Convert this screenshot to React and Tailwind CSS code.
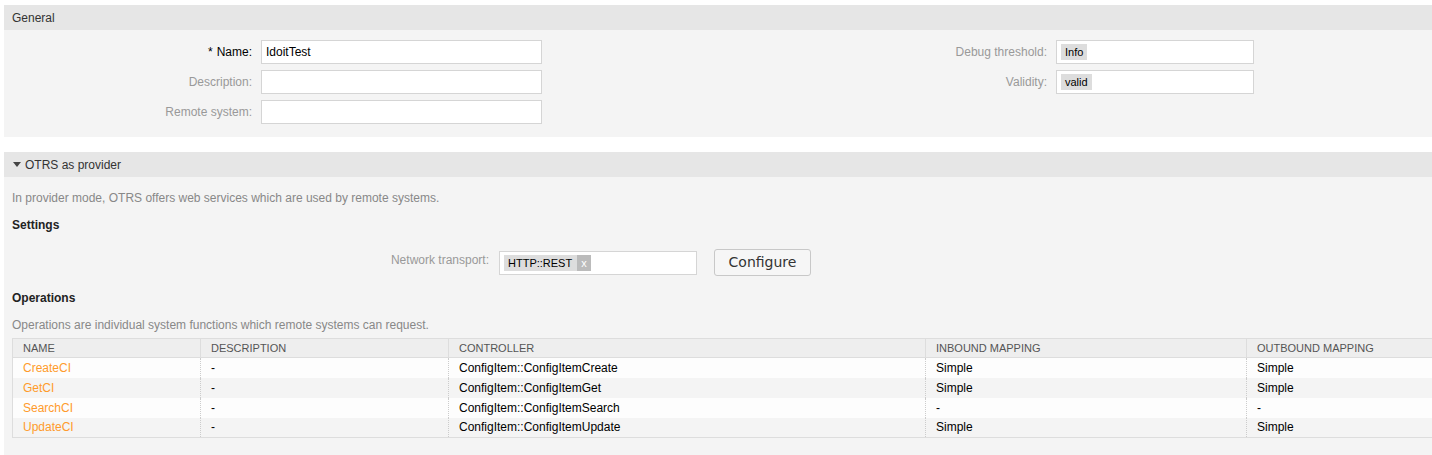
const rows = [
  { name: 'CreateCI', controller: 'ConfigItem::ConfigItemCreate', inbound: 'Simple', outbound: 'Simple' },
  { name: 'GetCI', controller: 'ConfigItem::ConfigItemGet', inbound: 'Simple', outbound: 'Simple' },
  { name: 'SearchCI', controller: 'ConfigItem::ConfigItemSearch', inbound: '-', outbound: '-' },
  { name: 'UpdateCI', controller: 'ConfigItem::ConfigItemUpdate', inbound: 'Simple', outbound: 'Simple' },
]

function Field({ label, required, children, labelW }) {
  return (
    <div className="flex items-center h-[24px]">
      <label className={`${labelW} text-right pr-[9px] ${required ? 'text-[#000]' : 'text-[#999]'}`}>
        {required && <span className="mr-[4px]">*</span>}
        {label}:
      </label>
      {children}
    </div>
  )
}

function Input({ w, children }) {
  return (
    <div className={`${w} h-[24px] bg-white border border-[#d5d5d5] flex items-center px-[4px]`}>
      {children}
    </div>
  )
}

function Tag({ children }) {
  return <span className="bg-[#ddd] text-[#000] text-[11px] leading-[16px] px-[4px]">{children}</span>
}

export default function App() {
  return (
    <div className="w-[1432px] h-[455px] overflow-hidden bg-white text-[12px] text-[#333]" style={{ fontFamily: '"Liberation Sans", Arial, sans-serif' }}>
      <div className="w-[1460px] ml-[4px] pt-[5px]">
        {/* General */}
        <section>
          <div className="h-[25px] bg-[#e6e6e6] flex items-center pl-[8px]">General</div>
          <div className="bg-[#f4f4f4] h-[107px] flex pt-[10px]">
            <div className="flex flex-col gap-[6px]">
              <Field label="Name" required labelW="w-[257px]">
                <Input w="w-[281px]"><span className="text-[#000]">IdoitTest</span></Input>
              </Field>
              <Field label="Description" labelW="w-[257px]">
                <Input w="w-[281px]" />
              </Field>
              <Field label="Remote system" labelW="w-[257px]">
                <Input w="w-[281px]" />
              </Field>
            </div>
            <div className="flex flex-col gap-[6px]">
              <Field label="Debug threshold" labelW="w-[514px]">
                <Input w="w-[198px]"><Tag>Info</Tag></Input>
              </Field>
              <Field label="Validity" labelW="w-[514px]">
                <Input w="w-[198px]"><Tag>valid</Tag></Input>
              </Field>
            </div>
          </div>
        </section>

        {/* OTRS as provider */}
        <section className="mt-[15px]">
          <div className="h-[25px] bg-[#e6e6e6] flex items-center pl-[9px] gap-[4px]">
            <span className="w-0 h-0 border-l-[4px] border-r-[4px] border-t-[5px] border-l-transparent border-r-transparent border-t-[#444]" />
            OTRS as provider
          </div>
          <div className="bg-[#f4f4f4] h-[300px] px-[8px]">
            <p className="text-[#888] pt-[14px] leading-[14px]">In provider mode, OTRS offers web services which are used by remote systems.</p>
            <h3 className="font-bold text-[#222] mt-[13px] leading-[14px]">Settings</h3>
            <div className="flex items-center mt-[17px] h-[27px]">
              <label className="w-[487px] text-right pr-[10px] text-[#999] -mt-[5px]">Network transport:</label>
              <div className="w-[198px] h-[24px] bg-white border border-[#d5d5d5] flex items-center px-[4px]">
                <span className="bg-[#ddd] text-[#000] text-[11px] leading-[16px] pl-[4px] flex items-center">
                  HTTP::REST
                  <span className="ml-[5px] bg-[#bbb] text-white px-[4px]">x</span>
                </span>
              </div>
              <button
                className="ml-[17px] w-[97px] h-[27px] bg-[#f6f6f6] border border-[#c8c8c8] rounded-[3px] text-[14px] text-[#333] pb-[1px]"
                style={{ fontFamily: '"DejaVu Sans", sans-serif' }}
              >
                Configure
              </button>
            </div>
            <h3 className="font-bold text-[#222] mt-[15px] leading-[14px]">Operations</h3>
            <p className="text-[#888] mt-[13px] leading-[14px]">Operations are individual system functions which remote systems can request.</p>
            <table className="mt-[6px] border border-[#ddd] border-collapse text-[12px]">
              <thead>
                <tr className="bg-[#eee] h-[19px] text-[11px] text-[#555] uppercase">
                  <th className="w-[188px] text-left font-normal pl-[10px] border-r border-[#ddd] border-b">Name</th>
                  <th className="w-[248px] text-left font-normal pl-[10px] border-r border-[#ddd] border-b">Description</th>
                  <th className="w-[477px] text-left font-normal pl-[10px] border-r border-[#ddd] border-b">Controller</th>
                  <th className="w-[321px] text-left font-normal pl-[10px] border-r border-[#ddd] border-b">Inbound Mapping</th>
                  <th className="w-[200px] text-left font-normal pl-[10px] border-b border-[#ddd]">Outbound Mapping</th>
                </tr>
              </thead>
              <tbody>
                {rows.map((r, i) => (
                  <tr key={r.name} className={`h-[20px] text-[#000] ${i % 2 === 0 ? 'bg-[#fdfdfd]' : 'bg-[#f4f4f4]'}`}>
                    <td className="pl-[10px] border-r border-dotted border-[#ccc] text-[#ff9b2b]">{r.name}</td>
                    <td className="pl-[10px] border-r border-dotted border-[#ccc]">-</td>
                    <td className="pl-[10px] border-r border-dotted border-[#ccc]">{r.controller}</td>
                    <td className="pl-[10px] border-r border-dotted border-[#ccc]">{r.inbound}</td>
                    <td className="pl-[10px]">{r.outbound}</td>
                  </tr>
                ))}
              </tbody>
            </table>
          </div>
        </section>
      </div>
    </div>
  )
}
